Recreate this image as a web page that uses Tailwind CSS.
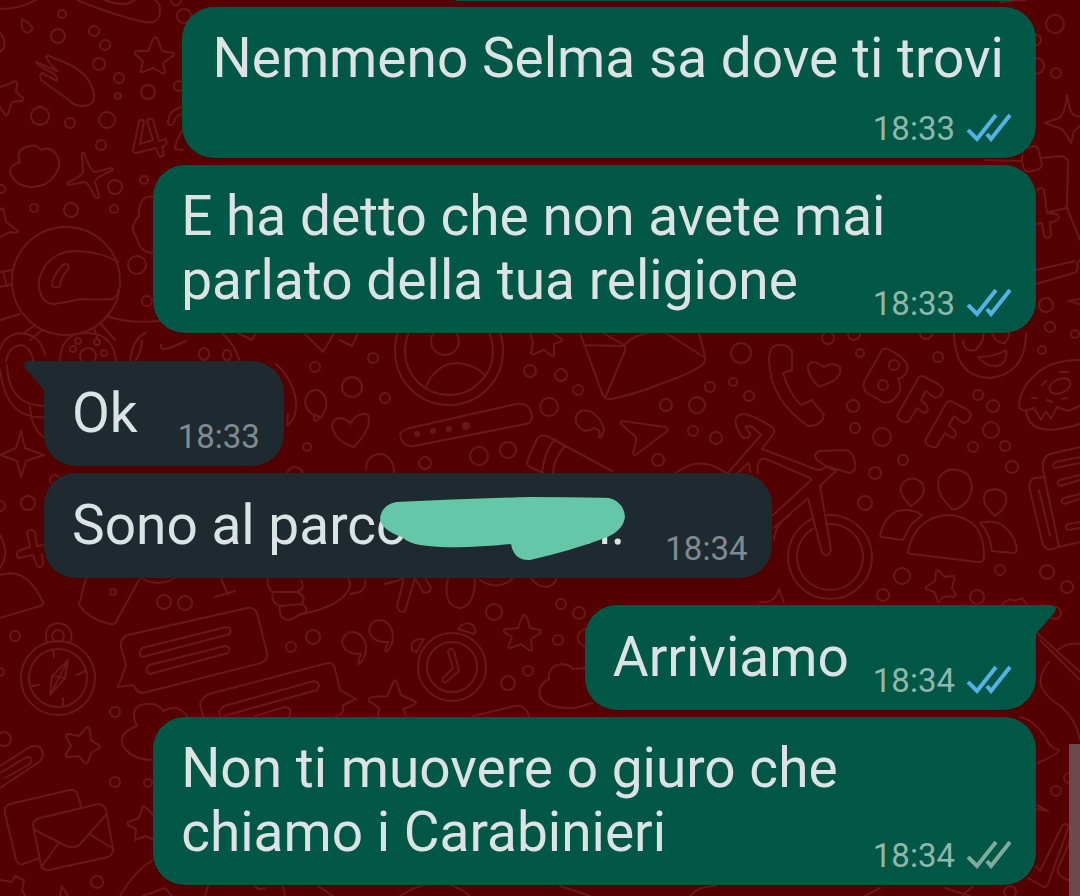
<!DOCTYPE html>
<html lang="it">
    <head>
        <meta charset="UTF-8">
        <meta name="viewport" content="width=device-width, initial-scale=1.0">
        <title>Chat</title>
        <script src="https://cdn.jsdelivr.net/npm/@tailwindcss/browser@4"></script>
    </head>
    <body class="bg-[#540000]">
        <div class="relative w-full min-h-screen overflow-hidden font-['Roboto',sans-serif] text-[55px] leading-[64px] text-[#dce3e5]">

            <!-- wallpaper -->
            <svg class="absolute inset-0 w-full h-full" viewBox="0 0 1080 896" preserveAspectRatio="xMinYMin slice" fill="none" stroke="#6b1618" stroke-width="2" stroke-linecap="round" stroke-linejoin="round" aria-hidden="true">
                <g id="dots"></g>
                <!-- top left -->
                <path d="M0 9Q20 9 36 0M77 0Q110 14 144 22Q160 25 160 10Q160 3 155 0M105 0Q125 8 135 0M0 33Q6 40 4 48L0 52"/>
                <path d="M22 19Q34 26 32 30Q27 35 23 30Q21 26 22 19Z"/>
                <path d="M36 62L57 71Q48 62 46 57Q48 54 53 58Q84 68 91 85Q100 105 83 106Q74 106 69 100L41 80Q39 74 42 73L57 81Q58 77 53 73Q38 66 36 62Z"/>
                <path d="M155 37Q157 37 158 40L162 51L173 53Q175 55 173 56L163 63L165 72Q165 75 162 73L153 68L143 72Q140 73 141 69L143 61L135 54Q134 51 137 51L148 51L153 39Z"/>
                <path d="M0 87L6 85L13 82Q17 80 17 84L16 92L23 98Q24 101 20 101L12 102L8 114Q6 117 4 113L0 107"/>
                <path d="M139 121L133 151Q133 153 137 153L156 148L159 156Q161 158 164 155L162 147Q168 145 166 139L159 141L153 120Q149 117 147 121L153 140L140 144L144 122Q142 118 139 121ZM183 107Q168 109 168 124Q172 127 174 122Q176 114 183 114M183 130Q176 139 175 149L183 150"/>
                <path d="M20 163Q15 150 27 147Q36 143 41 150Q51 146 56 154Q63 164 55 175Q46 188 30 187Q13 185 10 171Q12 163 20 163Z"/>
                <path d="M82 153Q85 152 85 156Q91 172 95 172L112 168Q114 170 111 171Q95 178 95 182L99 196Q98 200 95 197Q88 182 84 182L69 185Q65 184 69 182Q82 176 83 172Z"/>
                <path d="M0 210L3 208L6 222L18 231Q17 234 10 232L0 237"/>
                <circle cx="66" cy="281" r="54"/>
                <path d="M118 262Q100 251 72 251Q46 254 39 280Q38 303 54 304Q68 302 80 299Q100 300 112 299Q118 297 118 290M62 266Q52 276 52 286Q56 289 60 286Q60 278 69 268Q68 261 62 266Z"/>
                <path d="M0 272L12 270M0 287L12 284M3 272L7 286M0 320L20 314M106 316Q130 324 160 321M22 334L34 326M30 340L42 330M100 323L115 340M94 328L98 340M153 197Q138 195 139 216Q128 228 137 238Q140 253 154 253"/>
                <!-- left, around the incoming bubbles -->
                <path d="M0 350Q4 335 20 333Q40 334 45 355M6 362Q8 346 22 345Q33 350 33 362M0 370Q6 420 44 417M7 365Q8 405 44 406M30 407Q32 430 44 437M60 362Q60 332 88 333Q114 334 116 362M130 362Q132 340 145 333M135 362Q142 350 142 340M161 345Q160 352 172 347L186 341M222 333Q235 345 240 362"/>
                <circle cx="88" cy="356" r="8"/><circle cx="73" cy="349" r="3"/><circle cx="104" cy="353" r="3"/><circle cx="97" cy="342" r="3"/><circle cx="78" cy="341" r="3"/>
                <ellipse cx="204" cy="354" rx="5" ry="6"/><ellipse cx="227" cy="355" rx="4" ry="5"/>
                <path d="M21 431L25 448L44 455L26 461L21 477L17 461L0 455L16 448Z"/>
                <path d="M44 545L37 546L35 532Q31 527 27 532L30 547L18 551Q15 555 19 558L33 555L37 566Q41 569 43 564L42 554M0 535Q8 550 4 560L0 568"/>
                <path d="M0 575Q26 566 43 602Q44 605 40 606L0 618M86 578L79 605Q90 620 110 624Q114 625 116 622L139 580M141 578Q158 588 175 578M221 578L228 595M215 597L235 591"/>
                <path d="M276 364Q292 378 296 400Q297 420 287 425L288 414M322 417Q308 416 305 403Q306 389 318 390Q328 395 326 408Q322 419 315 421Q313 420 315 414"/>
                <path d="M354 447Q337 442 332 428Q332 418 341 418Q349 420 350 424Q358 411 368 415Q373 427 354 447Z"/>
                <path d="M304 333L323 352L334 333M238 333L252 340L256 333M340 340L352 346L358 333M366 470Q366 454 382 454Q394 458 394 473M400 415"/>
                <!-- middle band -->
                <circle cx="449" cy="351" r="54"/><circle cx="449" cy="351" r="44"/><circle cx="445" cy="341" r="14"/>
                <path d="M426 387Q436 363 458 363Q476 365 484 375M410 428L516 404Q530 402 532 416Q532 422 526 424L414 446Q402 448 400 434Q402 430 410 428Z"/>
                <g fill="#6b1618"><circle cx="417" cy="434" r="2"/><circle cx="433" cy="431" r="2"/><circle cx="449" cy="429" r="2"/><circle cx="466" cy="426" r="3"/></g>
                <path d="M530 333L533 342L531 353Q532 356 536 353L544 350L552 356Q554 357 554 353L554 344L562 341Q563 339 560 338L552 333"/>
                <path d="M580 333L602 393Q605 400 612 399Q645 391 660 384Q690 374 702 365Q706 362 705 356L699 333M584 345L622 346Q626 344 625 351L605 398M603 333L624 345Q634 335 648 333M666 333L704 357"/>
                <path d="M599 437Q602 430 594 428Q590 431 585 431Q574 426 576 416Q580 409 590 411Q602 418 604 430L601 438ZM622 421L665 427Q670 429 666 432L637 454Q633 457 633 452Q638 440 635 436L622 425Q619 422 622 421Z"/>
                <path d="M543 473L530 467Q526 465 528 459L537 439Q540 434 547 436L612 471M555 439Q544 452 542 473M565 446Q554 458 553 473M676 473Q700 454 726 473M728 473L761 435Q750 423 746 427L750 434Q749 440 742 437Q729 417 742 414Q750 413 772 427Q777 431 771 437L762 449M738 473L748 463Q750 464 750 472"/>
                <!-- bicycle -->
                <circle cx="830" cy="557" r="42"/><circle cx="830" cy="557" r="33"/>
                <path d="M762 449L815 469Q822 472 826 466L836 471L820 486L831 550Q828 559 822 553L808 498L774 528" fill="#540000"/>
                <path d="M758 473Q756 457 766 459L810 478Q812 480 809 482L773 515M826 466L817 460Q812 454 820 451L845 450Q852 450 855 462Q857 472 849 473L826 466M774 540Q775 524 790 515"/>
                <!-- phone and heart -->
                <path d="M773 347Q784 341 792 351L792 370L783 373Q790 395 801 405L812 400L824 415Q822 426 808 426Q770 400 769 360Q769 350 773 347ZM819 387Q807 375 808 366Q812 358 824 367Q833 361 840 367Q842 377 831 382Z"/>
                <!-- BFF -->
                <path d="M882 350L864 382Q862 388 867 393L883 402Q891 404 897 396Q903 388 898 379Q909 376 907 364Q902 356 890 350Q885 347 882 350Z"/><circle cx="894" cy="365" r="5"/><circle cx="883" cy="385" r="5"/>
                <path id="f" d="M919 377L898 414Q896 417 900 420Q906 424 909 421L917 408L924 413Q930 411 927 406L921 400L926 391L935 398Q941 398 943 390Q943 387 938 384L923 376Z"/>
                <use href="#f" x="28" y="25"/>
                <!-- emoji, donut -->
                <path d="M954 333Q955 378 991 378Q1026 373 1026 333M963 340Q964 353 976 350Q986 338 983 333M992 333Q996 344 1005 343Q1010 336 1009 333M978 357Q995 357 1006 350Q1008 364 996 366Q985 366 978 357Z"/>
                <path d="M1080 360Q1050 360 1035 375Q1020 388 1019 405Q1020 412 1028 410L1034 408L1041 420L1046 411L1051 419L1057 407L1068 411L1080 406M1026 411Q1030 440 1080 424M1042 385L1046 381M1032 398L1037 398M1047 400L1052 402M1062 399L1067 398M1060 372L1068 372"/><ellipse cx="1060" cy="386" rx="11" ry="7" transform="rotate(-24 1060 386)"/>
                <!-- people -->
                <path d="M911 506Q896 492 903 483Q912 474 922 483Q929 495 911 506ZM952 509Q934 492 939 478Q948 464 966 473Q977 485 967 501Q958 511 952 509ZM995 516Q979 502 986 492Q997 485 1006 495Q1008 507 995 516Z"/>
                <path d="M880 536Q886 510 905 510Q915 510 922 515L911 525Q905 536 903 540L881 537ZM908 552Q915 515 952 515Q985 520 984 557Q983 563 978 562L912 554Q908 554 908 552ZM980 523Q1003 517 1014 539Q1020 554 1013 553L992 551Q990 533 980 523Z"/>
                <path d="M936 571Q938 569 940 572L945 577L953 576Q956 577 954 580L952 588L956 595Q955 598 951 596L943 597L939 602Q937 603 937 598L934 592L926 589Q925 586 929 585L935 581Z"/>
                <!-- notebook -->
                <path d="M1080 447L1050 454Q1041 458 1043 470L1059 547L1080 542M1045 477L1035 478Q1028 480 1030 490L1043 545Q1048 553 1058 547M1039 490L1050 536M1080 463L1055 468Q1051 465 1056 462L1080 457M1080 480L1060 486Q1055 483 1060 480L1080 475M1080 499L1064 504Q1059 501 1064 498L1080 494M1080 528L1068 530Q1063 528 1068 524L1080 522"/>
                <!-- right edge -->
                <path d="M1067 95Q1070 113 1074 115L1080 117M1067 95Q1065 114 1059 118L1045 123L1062 129Q1067 135 1071 143L1074 131L1080 126M1023 149L1034 146Q1038 147 1039 152L1042 165Q1041 169 1036 170L1027 172Q1023 170 1022 160ZM1041 158L1060 156Q1069 157 1068 165L1067 205Q1067 209 1062 209L1049 212M1067 208L1080 240M1036 192Q1040 185 1044 190L1047 213L1057 214Q1061 217 1057 220L1050 223L1051 235Q1048 240 1044 236L1042 223L1036 224M1036 270L1075 261M1036 284L1074 273Q1079 271 1077 263L1080 260M1080 299L1068 301L1080 304M1000 2L1026 0M985 160L1022 161"/>
                <path d="M1036 632L1080 672M1040 640L1080 680M1058 650Q1067 642 1080 644M1049 662Q1035 680 1044 691Q1050 700 1062 707Q1076 720 1080 740M1020 717Q1035 720 1047 740Q1050 748 1059 750Q1060 753 1038 763M1036 809L1048 811L1036 805M1036 866L1040 871L1062 826Q1065 822 1069 826L1048 884Q1046 889 1042 886L1028 878M1080 820L1058 868Q1056 874 1064 878L1080 886M1002 605Q1008 597 1015 601L1022 598L1028 606M760 602Q775 604 779 589L784 603"/>
                <!-- compass -->
                <circle cx="58" cy="678" r="37"/><circle cx="58" cy="678" r="29"/><circle cx="58" cy="636" r="6"/>
                <path d="M47 643Q42 625 58 623Q76 626 70 643M68 660L50 695L52 676ZM52 676L65 678L50 695M53 650L54 657M77 675L85 671M32 686L39 685M63 706L63 698M68 660L65 678"/>
                <!-- speech bubbles -->
                <path d="M128 635L247 608Q254 607 257 613L267 653Q268 660 261 663L143 693Q137 693 134 686L133 685L118 687Q117 686 120 682L126 665L121 647Q120 638 128 635ZM142 648L226 627Q232 627 230 634L142 657Q137 654 142 648ZM149 665L225 646Q232 647 228 653L150 674Q144 671 149 665ZM203 716L200 704Q202 697 209 694L328 663Q334 663 335 669L340 690L356 699L343 705Q345 714 336 716M220 716Q218 710 224 706L314 681Q322 683 317 690L224 716M255 716L285 707Q293 708 289 716"/>
                <path d="M86 728Q88 726 90 730L91 740L100 746Q101 749 97 749L91 753L88 762Q86 765 84 762L79 756L70 757Q65 757 66 754L71 746L66 737Q65 734 69 734L79 736ZM137 726Q128 707 145 704Q158 702 163 711Q178 703 187 716M137 726Q120 732 122 744Q130 760 154 760"/>
                <path d="M0 766L30 747Q41 743 43 754Q43 760 36 764L0 788M0 773L27 757Q34 757 30 764L5 778"/>
                <!-- envelopes -->
                <path d="M40 858L23 864Q18 865 16 860L5 813Q4 806 10 804L70 790Q76 789 78 796L81 806M40 818L98 804Q104 804 106 810L113 849Q113 855 108 857L49 870Q42 870 41 865L33 825Q33 820 40 818ZM35 830L64 845Q75 850 81 843L106 815M58 844L42 866M91 835L112 848"/>
                <path d="M154 816L147 808L143 806L139 818L128 822Q127 825 130 826L136 829L135 840L146 836L154 840M0 880L12 882L15 876L24 880L22 890L25 896M60 896L62 886L68 896M120 896Q135 870 153 860M143 896L165 888L172 896M205 896L208 886M255 886Q258 891 265 888M283 886L285 896M318 886L333 896M400 896Q440 870 470 896M560 886L590 896M690 896Q700 885 716 886M865 896L880 888M945 888L970 896M962 896L973 886"/>
                <!-- thumb, quotes, clock -->
                <path d="M268 578Q266 587 273 592Q270 602 280 606Q278 620 290 620L301 614Q340 607 349 589Q352 584 348 578M301 580Q306 588 297 592Q307 597 302 604Q310 609 304 614M273 592L297 592M280 606L302 604M350 594L360 592Q367 588 365 578M385 584Q395 582 404 578L397 606Q399 614 405 611L415 578L423 592Q430 594 431 588L425 578M448 578Q442 606 460 608Q475 606 475 578M480 580Q498 592 513 578M531 578Q540 590 550 586Q557 582 556 578"/>
                <path id="q" d="M361 654Q345 655 342 642Q344 632 353 632Q363 633 366 646Q366 659 359 664Q357 663 361 654Z"/>
                <use href="#q" x="27" y="-12"/>
                <circle cx="452" cy="667" r="34"/><circle cx="452" cy="667" r="25"/>
                <path d="M448 651Q451 646 454 651L459 671L446 682Q441 683 443 678L453 668ZM458 629Q465 620 473 625Q477 632 474 634ZM412 651Q409 638 424 639Q420 644 417 652Z"/>
                <path d="M523 615Q525 614 527 618L530 628L540 630Q542 632 539 634L531 639L532 649Q532 652 529 650L521 644L511 648Q508 649 509 645L512 637L504 632Q503 629 507 629L518 628ZM378 716L379 708L369 701Q368 698 373 697L387 696L394 681Q396 679 397 683L401 695L416 702Q416 705 403 709L406 716M473 716L515 706Q525 704 529 716M549 679Q548 665 563 664Q569 665 573 669L586 668M549 679Q537 685 540 697Q546 709 575 708L592 703"/>
            </svg>

            <!-- message that has scrolled out above -->
            <div class="absolute top-0 right-[68px] left-[456px] h-px bg-[#005746]"></div>

            <main class="relative flex flex-col px-11 pt-[7px] pb-2 gap-[7px]">
                <div class="self-end max-w-[89%] rounded-[32px] bg-[#005746] shadow-sm flex flex-col pt-[19px] pb-[9px]">
                    <p class="pl-[30px] pr-8">Nemmeno Selma sa dove ti trovi</p>
                    <div class="self-end flex items-center gap-3 pr-[25px] mt-[19px] text-[33px] leading-10 text-[#8db8ac]">
                        <time>18:33</time>
                        <svg class="w-11 h-8 text-[#53b2e4]" viewBox="0 0 44 32" fill="none" stroke="currentColor" stroke-width="4" role="img" aria-label="Letto"><path d="M1 17L10 26L29 2M20 21L24 26L43 2"/></svg>
                    </div>
                </div>

                <div class="self-end max-w-[89%] rounded-[32px] bg-[#005746] shadow-sm grid pt-[19px] pb-[9px]">
                    <p class="col-start-1 row-start-1 px-7 pb-3">E ha detto che non avete mai parlato della tua religione</p>
                    <div class="col-start-1 row-start-1 self-end justify-self-end flex items-center gap-3 pr-[25px] text-[33px] leading-10 text-[#8db8ac]">
                        <time>18:33</time>
                        <svg class="w-11 h-8 text-[#53b2e4]" viewBox="0 0 44 32" fill="none" stroke="currentColor" stroke-width="4" role="img" aria-label="Letto"><path d="M1 17L10 26L29 2M20 21L24 26L43 2"/></svg>
                    </div>
                </div>

                <div class="relative self-start mt-[21px] rounded-[32px] rounded-tl-none bg-[#1f2a30] shadow-sm flex items-end gap-10 pl-7 pr-6 pt-5 pb-[9px]">
                    <svg class="absolute top-0 -left-5 w-5 h-8" viewBox="0 0 20 32" fill="#1f2a30" aria-hidden="true"><path d="M20 0H5Q-3 1 2 8L20 29Z"/></svg>
                    <p class="pb-3">Ok</p>
                    <time class="text-[33px] leading-10 text-[#7f8b91]">18:33</time>
                </div>

                <div class="relative self-start rounded-[32px] bg-[#1f2a30] shadow-sm flex items-end gap-10 pl-7 pr-6 pt-5 pb-[9px]">
                    <p class="pb-3 flex">Sono al parco <span class="w-[173px]"></span>n.</p>
                    <time class="text-[33px] leading-10 text-[#7f8b91]">18:34</time>
                    <!-- marker stroke over the place name -->
                    <svg class="absolute top-6 left-[336px] w-[246px] h-16" viewBox="0 0 246 64" fill="#66c7a8" aria-hidden="true"><path d="M16 5Q80 2 150 0Q200 0 229 1Q244 5 245 20Q243 34 225 41Q190 54 150 63Q134 64 131 47Q75 53 40 48Q28 46 22 40Q1 33 0 21Q2 8 16 5Z"/></svg>
                </div>

                <div class="relative self-end mt-5 rounded-[32px] rounded-tr-none bg-[#005746] shadow-sm flex items-end gap-6 pl-7 pr-[25px] pt-5 pb-[9px]">
                    <svg class="absolute top-0 -right-5 w-5 h-8" viewBox="0 0 20 32" fill="#005746" aria-hidden="true"><path d="M0 0H15Q23 1 18 8L0 29Z"/></svg>
                    <p class="pb-3">Arriviamo</p>
                    <div class="flex items-center gap-3 text-[33px] leading-10 text-[#8db8ac]">
                        <time>18:34</time>
                        <svg class="w-11 h-8 text-[#53b2e4]" viewBox="0 0 44 32" fill="none" stroke="currentColor" stroke-width="4" role="img" aria-label="Letto"><path d="M1 17L10 26L29 2M20 21L24 26L43 2"/></svg>
                    </div>
                </div>

                <div class="self-end max-w-[89%] rounded-[32px] bg-[#005746] shadow-sm grid pt-[19px] pb-[9px]">
                    <p class="col-start-1 row-start-1 px-7 pb-3">Non ti muovere o giuro che chiamo i Carabinieri</p>
                    <div class="col-start-1 row-start-1 self-end justify-self-end flex items-center gap-3 pr-[25px] text-[33px] leading-10 text-[#8db8ac]">
                        <time>18:34</time>
                        <svg class="w-11 h-8 text-[#7faa9e]" viewBox="0 0 44 32" fill="none" stroke="currentColor" stroke-width="4" role="img" aria-label="Consegnato"><path d="M1 17L10 26L29 2M20 21L24 26L43 2"/></svg>
                    </div>
                </div>
            </main>

            <!-- scrollbar thumb -->
            <div class="absolute right-0 bottom-0 w-[11px] h-[152px] bg-[#6c494d]"></div>
        </div>
    </body>
    <script>
        // x, y, radius
        const dots = [
            [62,14,4],[94,31,5],[58,36,7],[105,45,5],[99,64,6],[119,78,5],[118,96,3],[148,92,7],[184,16,7],[179,86,5],
            [40,116,9],[70,123,5],[107,120,8],[101,145,5],[144,180,4],[115,187,7],[34,208,4],[71,210,7],[114,209,4],
            [137,265,9],[147,301,5],[1,189,4],[176,0,5],[1046,305,7],[1050,327,5],[1075,334,4],[926,333,6],[1055,24,9],
            [1056,73,5],[1036,66,8],[1036,40,5],[1042,350,4],[315,367,5],[373,358,5],[352,387,10],[385,398,5],[307,447,4],
            [28,503,7],[0,506,5],[55,480,5],[295,475,8],[530,371,6],[561,375,6],[578,390,5],[549,407,9],[479,456,9],
            [508,450,8],[425,463,6],[741,353,10],[733,382,4],[710,387,5],[749,396,5],[666,405,6],[697,405,8],[693,431,5],
            [716,438,6],[658,460,6],[828,338,6],[860,353,4],[854,334,6],[938,357,5],[853,406,6],[855,428,5],[882,437,9],
            [978,395,5],[993,406,6],[991,430,8],[1005,446,5],[973,447,5],[1012,467,6],[903,460,5],[875,473,6],[865,503,7],
            [902,576,8],[883,595,6],[1000,570,5],[977,597,7],[1047,572,7],[1067,587,6],[1055,613,6],[15,636,5],[0,672,4],
            [164,602,7],[185,603,7],[113,592,3],[291,647,5],[115,712,5],[4,739,7],[115,782,5],[148,783,4],[97,882,6],
            [313,637,7],[494,612,8],[561,604,5],[579,613,6],[558,640,5],[508,683,7],[528,671,5],[587,638,9],[1056,791,5],
            [1069,778,5],[1010,892,6]
        ]
        const group = document.getElementById("dots")
        for(const [x, y, r] of dots){
            let circle = document.createElementNS("http://www.w3.org/2000/svg", "circle")
            circle.setAttribute("cx", x)
            circle.setAttribute("cy", y)
            circle.setAttribute("r", r)
            group.appendChild(circle)
        }
    </script>
</html>
